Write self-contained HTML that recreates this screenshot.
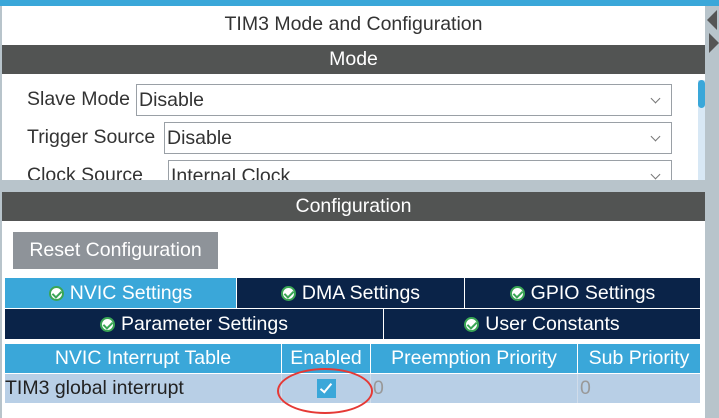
<!DOCTYPE html>
<html><head><style>
*{margin:0;padding:0;box-sizing:border-box}
body{width:719px;height:418px;overflow:hidden;background:#b8c4cb;font-family:"Liberation Sans",sans-serif;position:relative}
.a{position:absolute}
.t{display:flex;align-items:center;justify-content:center;color:#fff;font-size:19.5px}
.ck{display:inline-block;width:15px;height:15px;border-radius:50%;background:#fff;border:2px solid #3aa655;margin-right:6px;position:relative}
.ck:after{content:"";position:absolute;left:3px;top:1px;width:4px;height:7px;border:solid #3aa655;border-width:0 2px 2px 0;transform:rotate(45deg)}
.sel{position:absolute;border:1px solid #9aa0a6;background:#fff;font-size:19.5px;color:#333;padding-left:2px;line-height:30px;height:32px}
.sel:after{content:"";position:absolute;right:12px;top:10px;width:6px;height:6px;border:solid #777;border-width:0 1px 1px 0;transform:rotate(45deg)}
.lab{position:absolute;font-size:19.5px;color:#333}
</style></head><body>
<div class="a" style="left:0;top:0;width:719px;height:6px;background:#3aa7d9"></div>
<div class="a" style="left:2px;top:6px;width:703px;height:174px;background:#fff;overflow:hidden">
 <div class="a" style="left:0;top:7px;width:703px;text-align:center;font-size:19.5px;color:#333">TIM3 Mode and Configuration</div>
 <div class="a t" style="left:0;top:39px;width:703px;height:29px;background:#525453">Mode</div>
 <div class="lab" style="left:25px;top:82px">Slave Mode</div>
 <div class="sel" style="left:134px;top:78px;width:536px">Disable</div>
 <div class="lab" style="left:25px;top:120px">Trigger Source</div>
 <div class="sel" style="left:162px;top:116px;width:508px">Disable</div>
 <div class="lab" style="left:25px;top:158px">Clock Source</div>
 <div class="sel" style="left:166px;top:154px;width:504px">Internal Clock</div>
 <div class="a" style="left:696px;top:74px;width:7px;height:100px;background:#d8e8f5"></div>
 <div class="a" style="left:696px;top:74px;width:7px;height:28px;background:#3aa7d9;border-radius:4px"></div>
</div>
<div class="a" style="left:707px;top:10px;width:0;height:0;border-top:10px solid transparent;border-bottom:10px solid transparent;border-right:10px solid #555"></div>
<div class="a" style="left:709px;top:33px;width:0;height:0;border-top:10px solid transparent;border-bottom:10px solid transparent;border-left:10px solid #555"></div>
<div class="a" style="left:2px;top:192px;width:703px;height:226px;background:#fff">
 <div class="a t" style="left:0;top:0;width:703px;height:29px;background:#525453">Configuration</div>
 <div class="a t" style="left:11px;top:40px;width:205px;height:37px;background:#8e9399">Reset Configuration</div>
 <div class="a t" style="left:3px;top:86px;width:231px;height:30px;background:#3aa7d9"><span class="ck"></span>NVIC Settings</div>
 <div class="a t" style="left:235px;top:86px;width:227px;height:30px;background:#0a2348"><span class="ck"></span>DMA Settings</div>
 <div class="a t" style="left:463px;top:86px;width:235px;height:30px;background:#0a2348"><span class="ck"></span>GPIO Settings</div>
 <div class="a t" style="left:3px;top:117px;width:378px;height:30px;background:#0a2348"><span class="ck"></span>Parameter Settings</div>
 <div class="a t" style="left:382px;top:117px;width:316px;height:30px;background:#0a2348"><span class="ck"></span>User Constants</div>
 <div class="a t" style="left:3px;top:152px;width:276px;height:29px;background:#3aa7d9">NVIC Interrupt Table</div>
 <div class="a t" style="left:280px;top:152px;width:88px;height:29px;background:#3aa7d9">Enabled</div>
 <div class="a t" style="left:369px;top:152px;width:206px;height:29px;background:#3aa7d9">Preemption Priority</div>
 <div class="a t" style="left:576px;top:152px;width:122px;height:29px;background:#3aa7d9">Sub Priority</div>
 <div class="a" style="left:3px;top:182px;width:695px;height:29px;background:#b8cfe6"></div>
 <div class="a" style="left:279px;top:182px;width:1px;height:29px;background:#d0dcea"></div>
 <div class="a" style="left:368px;top:182px;width:1px;height:29px;background:#d0dcea"></div>
 <div class="a" style="left:575px;top:182px;width:1px;height:29px;background:#d0dcea"></div>
 <div class="a" style="left:3px;top:185px;font-size:19.5px;color:#222">TIM3 global interrupt</div>
 <div class="a" style="left:371px;top:185px;font-size:19.5px;color:#999">0</div>
 <div class="a" style="left:578px;top:185px;font-size:19.5px;color:#999">0</div>
 <div class="a" style="left:315px;top:187px;width:19px;height:19px;background:#3aa7d9"></div>
 <div class="a" style="left:321px;top:189px;width:6px;height:12px;border:solid #fff;border-width:0 2px 2px 0;transform:rotate(40deg)"></div>
 <div class="a" style="left:275px;top:176px;width:96px;height:46px;border:2px solid #e53935;border-radius:50%"></div>
</div>
</body></html>
